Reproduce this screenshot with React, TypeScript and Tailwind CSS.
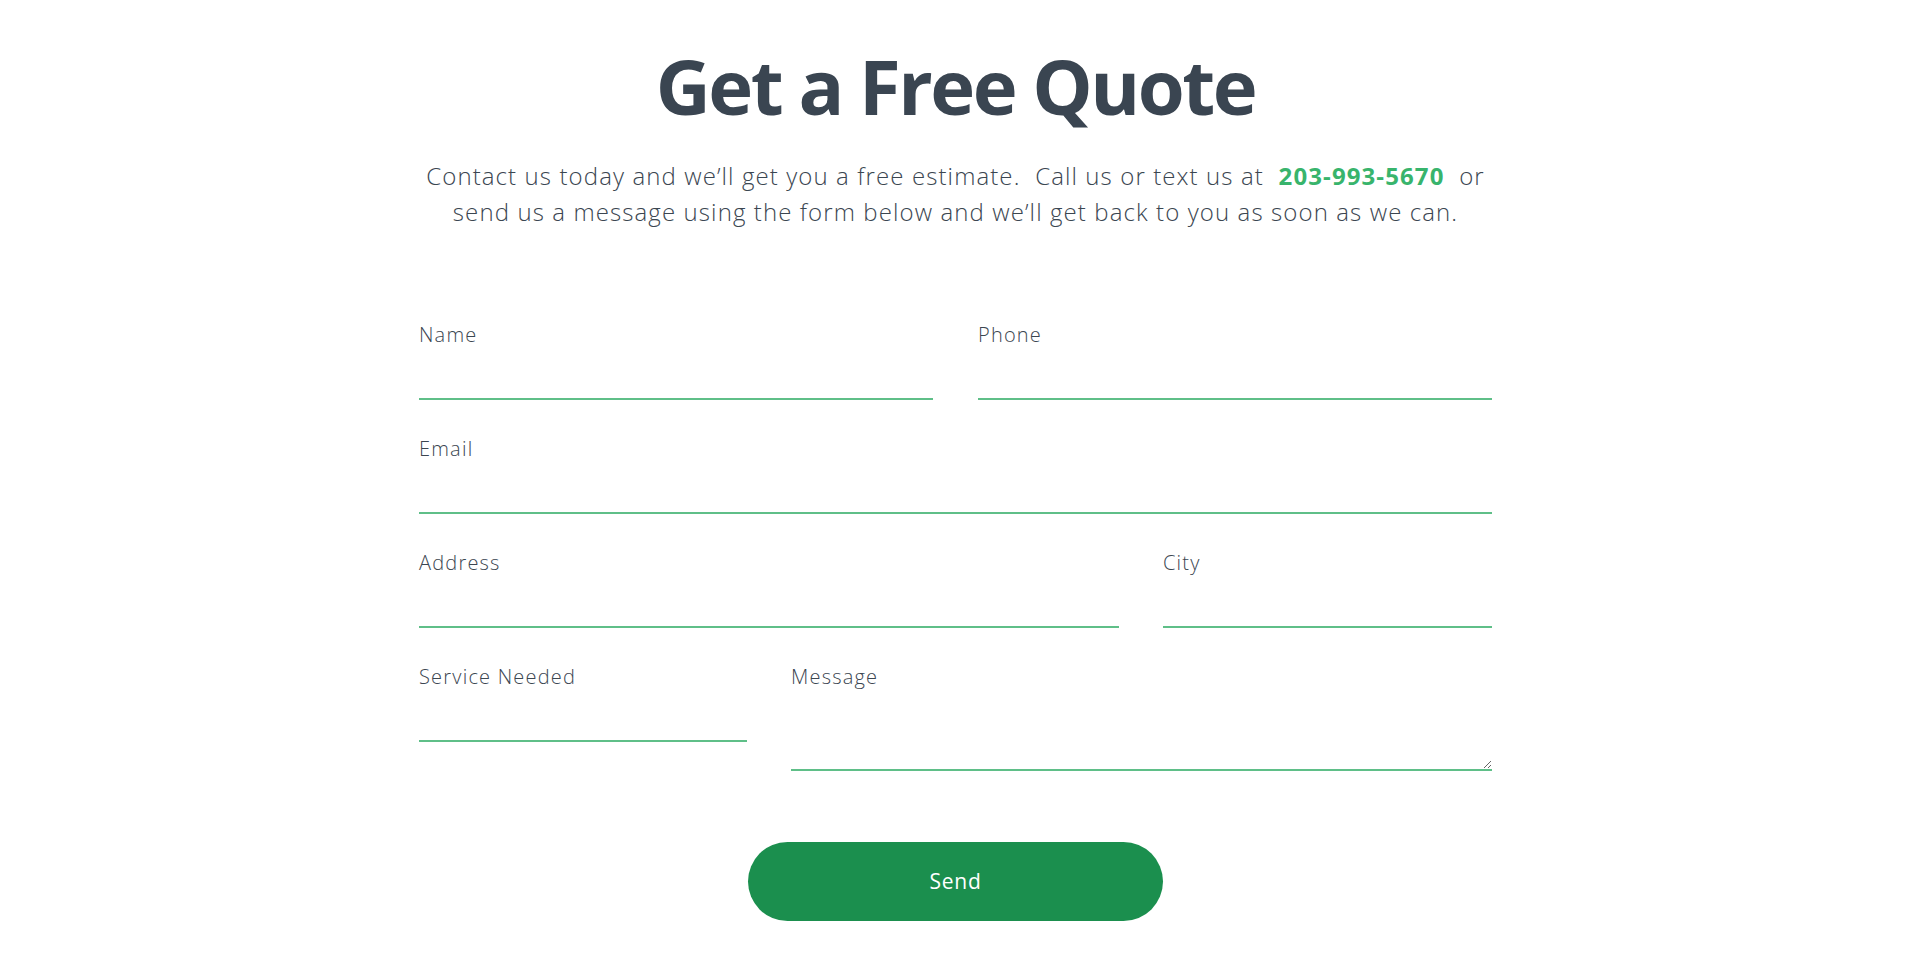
import React from "react";

const font = "font-['Open_Sans','Noto_Sans',sans-serif]";

function Field({ label, textarea = false }: { label: string; textarea?: boolean }) {
  return (
    <label className="flex flex-col">
      <span className="h-[30px] leading-[30px] text-[20px] tracking-[1.2px] font-light text-[#3b4651]">{label}</span>
      {textarea ? (
        <textarea className="w-full h-[79px] border-0 border-b-2 border-[#5fbf88] bg-transparent outline-none" />
      ) : (
        <input className="w-full h-[50px] border-0 border-b-2 border-[#5fbf88] bg-transparent outline-none" />
      )}
    </label>
  );
}

export default function App() {
  return (
    <div className={`min-h-[964px] w-full bg-white ${font} text-[#3b4651]`}>
      <div className="flex flex-col items-center pr-[9px]">
        <h1 className="mt-[38px] text-[76px] leading-[96px] font-bold text-[#3a4551] tracking-[-2.5px]">
          Get a Free Quote
        </h1>
        <p className="mt-[24px] text-center text-[24px] leading-[36px] tracking-[1.1px] font-light text-[#3b4651]">
          Contact us today and we’ll get you a free estimate.&nbsp; Call us or text us at&nbsp;{" "}
          <span className="font-bold text-[#38b46c]">203-993-5670</span>&nbsp; or
          <br />
          send us a message using the form below and we’ll get back to you as soon as we can.
        </p>
        <form className="mt-[90px] w-[1073px] flex flex-col gap-[34px]">
          <div className="grid grid-cols-2 gap-x-[45px]">
            <Field label="Name" />
            <Field label="Phone" />
          </div>
          <Field label="Email" />
          <div className="grid grid-cols-[700px_1fr] gap-x-[44px]">
            <Field label="Address" />
            <Field label="City" />
          </div>
          <div className="grid grid-cols-[328px_1fr] gap-x-[44px] items-start">
            <Field label="Service Needed" />
            <Field label="Message" textarea />
          </div>
        </form>
        <button
          type="button"
          className="mt-[71px] w-[415px] h-[79px] rounded-full bg-[#1b8f4e] text-white text-[21px] tracking-[0.8px] font-normal"
        >
          Send
        </button>
      </div>
    </div>
  );
}
